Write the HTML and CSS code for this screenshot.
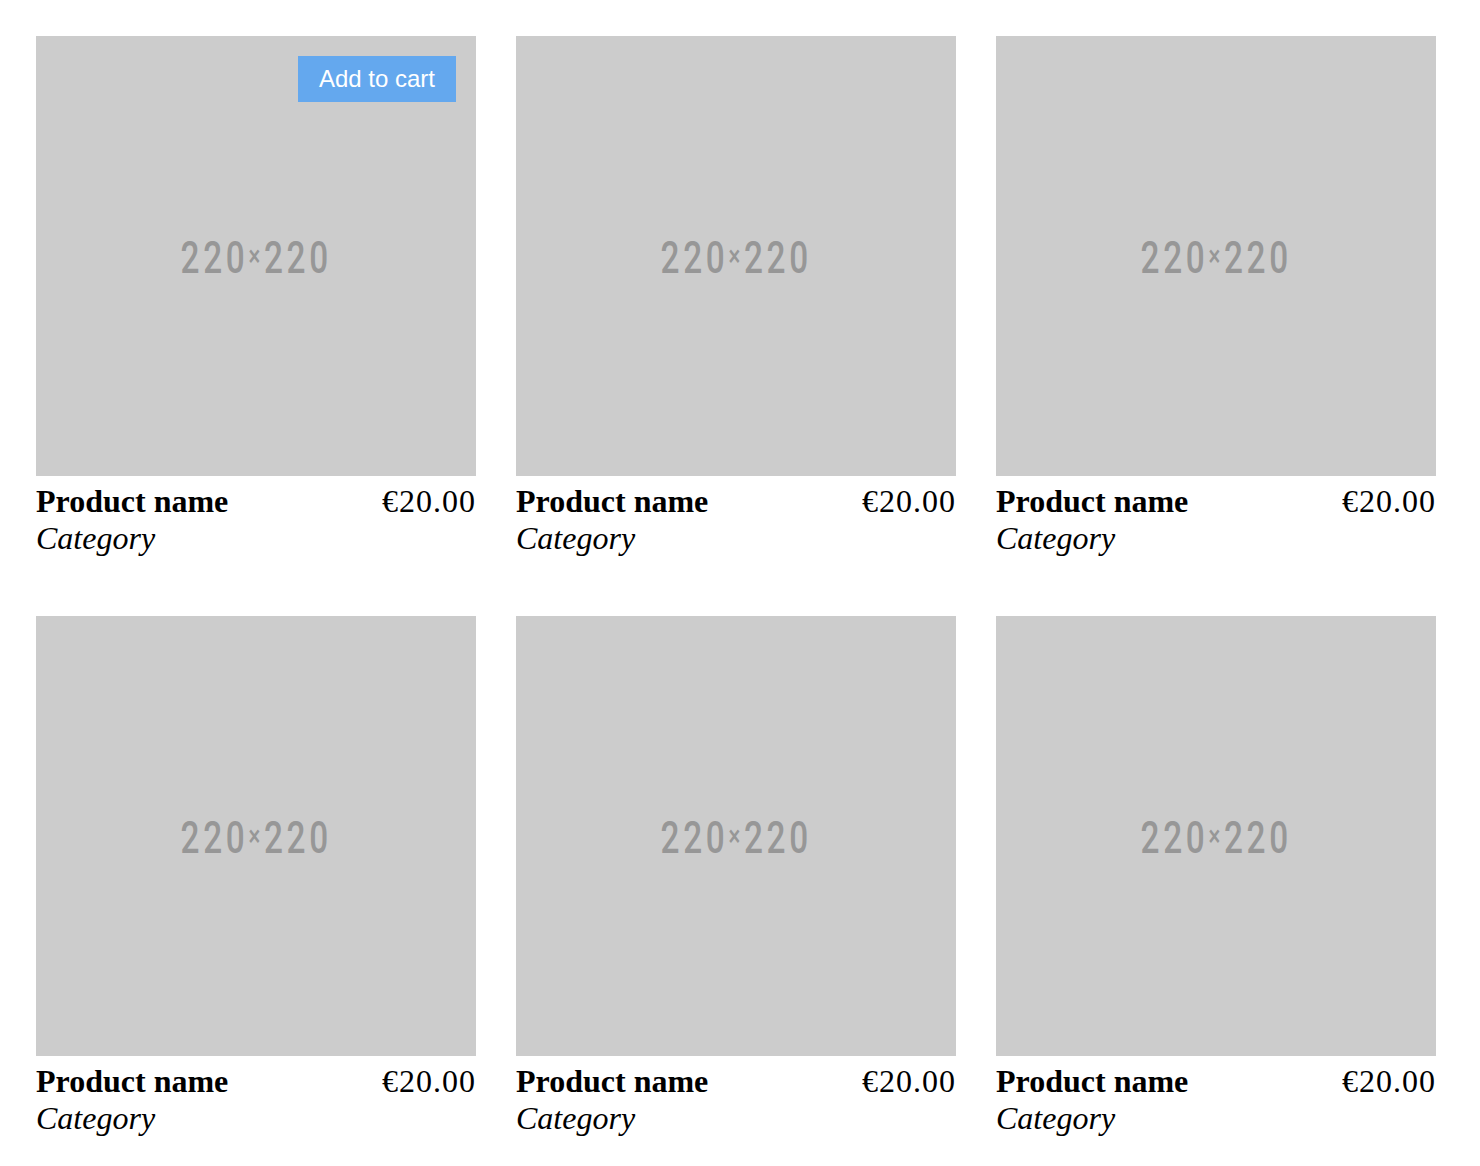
FILE: index.html
```html
<!DOCTYPE html>
<html>
<head>
    <meta charset="UTF-8">
    <title>Products</title>
    <link rel="stylesheet" href="styles.css">
</head>
<body>
    <div class="products">
        <div class="product">
            <div class="thumb">
                <span class="size">220<small>×</small>220</span>
                <a href="javascript:;" class="add">Add to cart</a>
            </div>
            <div class="info">
                <b class="name">Product name</b>
                <span class="price">€20.00</span>
            </div>
            <i class="cat">Category</i>
        </div>
        <div class="product">
            <div class="thumb"><span class="size">220<small>×</small>220</span></div>
            <div class="info">
                <b class="name">Product name</b>
                <span class="price">€20.00</span>
            </div>
            <i class="cat">Category</i>
        </div>
        <div class="product">
            <div class="thumb"><span class="size">220<small>×</small>220</span></div>
            <div class="info">
                <b class="name">Product name</b>
                <span class="price">€20.00</span>
            </div>
            <i class="cat">Category</i>
        </div>
        <div class="product">
            <div class="thumb"><span class="size">220<small>×</small>220</span></div>
            <div class="info">
                <b class="name">Product name</b>
                <span class="price">€20.00</span>
            </div>
            <i class="cat">Category</i>
        </div>
        <div class="product">
            <div class="thumb"><span class="size">220<small>×</small>220</span></div>
            <div class="info">
                <b class="name">Product name</b>
                <span class="price">€20.00</span>
            </div>
            <i class="cat">Category</i>
        </div>
        <div class="product">
            <div class="thumb"><span class="size">220<small>×</small>220</span></div>
            <div class="info">
                <b class="name">Product name</b>
                <span class="price">€20.00</span>
            </div>
            <i class="cat">Category</i>
        </div>
    </div>
</body>
</html>
```

FILE: styles.css
```css
* {
    margin: 0;
    padding: 0;
}
body{
    background: #fff;
    font-family: "Liberation Serif", "Times New Roman", serif;
    font-size: 32px;
    color: #000;
}
.products{
    display: grid;
    grid-template-columns: repeat(3, 440px);
    column-gap: 40px;
    row-gap: 59px;
    padding: 36px;
}
.product{display:flex;flex-direction:column;}
.thumb{
    position: relative;
    width: 440px;
    height: 440px;
    background: #ccc;
    display: flex;
    align-items: center;
    justify-content: center;
}
.size{
    display: inline-block;
    font-family: Roboto, "DejaVu Sans", sans-serif;
    font-size: 45px;
    font-weight: 500;
    letter-spacing: 5px;
    color: #979797;
    transform: scaleX(0.74);
    margin-top: 3px;
}
.size small{
    font-size: 30px;
    position: relative;
    top: -7px;
}
.add{
    position: absolute;
    top: 20px;
    right: 20px;
    padding: 9px 21px;
    line-height: 28px;
    background: #64a8ee;
    color: #fff;
    text-decoration: none;
    font-family: "Liberation Sans", Arial, sans-serif;
    font-size: 24px;
}
.info{display:flex;justify-content:space-between;line-height:normal;margin-top:7px;}
.name{font-weight:bold;}
.price{letter-spacing:1px;}
.cat{font-style:italic;}
```
